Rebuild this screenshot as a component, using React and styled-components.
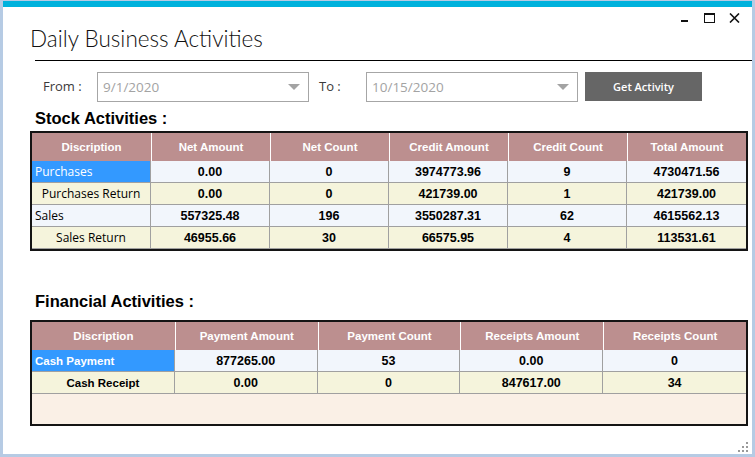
import React from "react"
import styled, { createGlobalStyle } from "styled-components"

const GlobalStyle = createGlobalStyle`
	html, body {
		margin: 0;
		padding: 0;
		background: #fff;
	}
	body {
		font-family: "Open Sans", "Liberation Sans", sans-serif;
	}
`

const Frame = styled.div`
	width: 755px;
	height: 457px;
	box-sizing: border-box;
	padding: 1px 3px 3px;
	background: #b6cbe4;
`

const Window = styled.div`
	position: relative;
	height: 100%;
	box-sizing: border-box;
	border-top: 6px solid #00b2dd;
	background: #fff;
	display: flex;
	flex-direction: column;
`

const TitleBar = styled.div`
	height: 18px;
	display: flex;
	justify-content: flex-end;
	align-items: flex-start;
	padding: 6px 5px 0 0;
	box-sizing: border-box;
`

const Control = styled.div`
	width: 25px;
	height: 10px;
	display: flex;
	justify-content: center;
	align-items: center;
`

const Title = styled.h1`
	margin: 0 0 0 27px;
	font-family: Lato, "Open Sans", sans-serif;
	font-weight: 300;
	font-size: 22.5px;
	line-height: 28px;
	color: #111;
`

const Divider = styled.div`
	height: 1px;
	margin: 7px 0 0 32px;
	background: #000;
`

const FilterRow = styled.div`
	display: flex;
	align-items: flex-start;
	margin: 11px 0 0 40px;
`

const Label = styled.span`
	width: ${props => props.width}px;
	margin-left: ${props => props.offset || 0}px;
	height: 30px;
	line-height: 28px;
	font-size: 13px;
	color: #3a3a3a;
`

const Select = styled.div`
	width: 212px;
	height: 30px;
	box-sizing: border-box;
	border: 1px solid #a6a6a6;
	display: flex;
	align-items: center;
	justify-content: space-between;
	padding: 0 8px 0 5px;
	font-size: 13.5px;
	color: #a3a3a3;

	&::after {
		content: "";
		border-left: 6px solid transparent;
		border-right: 6px solid transparent;
		border-top: 6px solid #a3a3a3;
	}
`

const Button = styled.button`
	width: 117px;
	height: 29px;
	margin-left: 7px;
	border: none;
	background: #666666;
	color: #fff;
	font-family: "Open Sans", sans-serif;
	font-weight: 600;
	font-size: 11px;
	padding: 0;
`

const SectionTitle = styled.h2`
	margin: ${props => props.top}px 0 0 32px;
	font-family: "Liberation Sans", Arial, sans-serif;
	font-weight: 700;
	font-size: 16.5px;
	line-height: 18px;
	color: #000;
`

const TableBox = styled.div`
	width: 718px;
	height: ${props => props.height}px;
	box-sizing: border-box;
	margin: ${props => props.top}px 0 0 27px;
	border: 2px solid #141414;
	background: #faf0e6;
`

const Grid = styled.div`
	display: grid;
	grid-template-columns: repeat(${props => props.cols}, 1fr);
	grid-template-rows: 28px;
	grid-auto-rows: 22px;
`

const HeadCell = styled.div`
	display: flex;
	align-items: center;
	justify-content: center;
	background: #bc8f8f;
	color: #fff;
	font-family: "Liberation Sans", Arial, sans-serif;
	font-weight: 700;
	font-size: 11.5px;
	border-left: 1px solid #fff;

	&:first-child {
		border-left: none;
	}
`

const Cell = styled.div`
	display: flex;
	align-items: center;
	justify-content: ${props => (props.left ? "flex-start" : "center")};
	padding-left: ${props => (props.left ? 3 : 0)}px;
	box-sizing: border-box;
	border-bottom: 1px solid #a0a0a0;
	border-right: ${props => (props.last ? "none" : "1px solid #a0a0a0")};
	background: ${props => (props.selected ? "#3399ff" : props.alt ? "#f5f4dc" : "#f2f6fc")};
	color: ${props => (props.selected ? "#fff" : "#000")};
	font-family: ${props => (props.plain ? `"Open Sans", sans-serif` : `"Liberation Sans", Arial, sans-serif`)};
	font-weight: ${props => (props.plain ? 400 : 700)};
	font-size: ${props => props.size}px;
	white-space: nowrap;
`

const Grip = styled.svg`
	position: absolute;
	right: 4px;
	bottom: 2px;
`

const stockColumns = ["Discription", "Net Amount", "Net Count", "Credit Amount", "Credit Count", "Total Amount"]
const stockRows = [
	["Purchases", "0.00", "0", "3974773.96", "9", "4730471.56"],
	["Purchases Return", "0.00", "0", "421739.00", "1", "421739.00"],
	["Sales", "557325.48", "196", "3550287.31", "62", "4615562.13"],
	["Sales Return", "46955.66", "30", "66575.95", "4", "113531.61"],
]

const financeColumns = ["Discription", "Payment Amount", "Payment Count", "Receipts Amount", "Receipts Count"]
const financeRows = [
	["Cash Payment", "877265.00", "53", "0.00", "0"],
	["Cash Receipt", "0.00", "0", "847617.00", "34"],
]

const DataTable = ({ columns, rows, height, top, plainFirst }) => (
	<TableBox height={height} top={top}>
		<Grid cols={columns.length}>
			{columns.map(c => (
				<HeadCell key={c}>{c}</HeadCell>
			))}
			{rows.map((row, r) =>
				row.map((value, i) => (
					<Cell
						key={`${r}-${i}`}
						alt={r % 2 === 1}
						left={i === 0 && r % 2 === 0}
						selected={i === 0 && r === 0}
						plain={i === 0 && plainFirst}
						size={i === 0 ? (plainFirst ? 12 : 11.5) : 12.5}
						last={i === row.length - 1}
					>
						{value}
					</Cell>
				))
			)}
		</Grid>
	</TableBox>
)

const WindowControls = () => (
	<TitleBar>
		<Control>
			<svg width="11" height="10" viewBox="0 0 11 10">
				<rect x="2" y="7" width="7" height="2" fill="#111" />
			</svg>
		</Control>
		<Control>
			<svg width="11" height="10" viewBox="0 0 11 10">
				<rect x="0.5" y="1" width="10" height="8.5" fill="none" stroke="#111" />
				<rect x="0" y="0" width="11" height="2" fill="#111" />
			</svg>
		</Control>
		<Control>
			<svg width="11" height="10" viewBox="0 0 11 10">
				<path d="M1 0.5 L10 9.5 M10 0.5 L1 9.5" stroke="#111" strokeWidth="1.6" />
			</svg>
		</Control>
	</TitleBar>
)

const App = () => (
	<>
		<GlobalStyle />
		<Frame>
			<Window>
				<WindowControls />
				<Title>Daily Business Activities</Title>
				<Divider />
				<FilterRow>
					<Label width={54}>From :</Label>
					<Select>9/1/2020</Select>
					<Label width={47} offset={10}>To :</Label>
					<Select>10/15/2020</Select>
					<Button>Get Activity</Button>
				</FilterRow>
				<SectionTitle top={7}>Stock Activities :</SectionTitle>
				<DataTable columns={stockColumns} rows={stockRows} height={120} top={4} plainFirst />
				<SectionTitle top={41}>Financial Activities :</SectionTitle>
				<DataTable columns={financeColumns} rows={financeRows} height={106} top={10} />
				<Grip width="10" height="10" viewBox="0 0 10 10">
					{[[8, 0], [4, 4], [8, 4], [0, 8], [4, 8], [8, 8]].map(([x, y]) => (
						<rect key={`${x}${y}`} x={x} y={y} width="2" height="2" fill="#9a9a9a" />
					))}
				</Grip>
			</Window>
		</Frame>
	</>
)

export default App
